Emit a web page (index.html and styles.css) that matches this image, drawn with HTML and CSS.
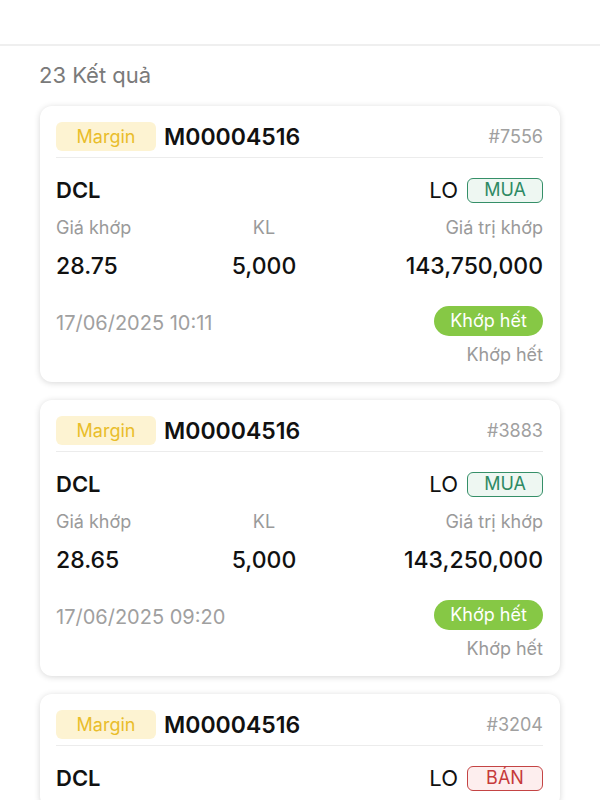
FILE: index.html
```html
<!DOCTYPE html>
<html lang="vi">
<head>
    <meta charset="UTF-8">
    <meta name="viewport" content="width=device-width, initial-scale=1.0">
    <title>Lệnh khớp</title>
    <link rel="stylesheet" href="styles.css">
</head>
<body>
    <div class="topbar"></div>

    <div class="result-count">23 Kết quả</div>

    <div class="list">
        <div class="card">
            <div class="card-head">
                <span class="tag-margin">Margin</span>
                <span class="account">M00004516</span>
                <span class="order-no">#7556</span>
            </div>
            <div class="row-symbol">
                <span class="symbol">DCL</span>
                <div class="type">
                    <span class="lo">LO</span>
                    <span class="side buy">MUA</span>
                </div>
            </div>
            <div class="grid">
                <span class="label">Giá khớp</span>
                <span class="label center">KL</span>
                <span class="label right">Giá trị khớp</span>
                <span class="value">28.75</span>
                <span class="value center">5,000</span>
                <span class="value right">143,750,000</span>
            </div>
            <div class="card-foot">
                <span class="date">17/06/2025 10:11</span>
                <div class="status">
                    <span class="pill">Khớp hết</span>
                    <span class="status-text">Khớp hết</span>
                </div>
            </div>
        </div>

        <div class="card">
            <div class="card-head">
                <span class="tag-margin">Margin</span>
                <span class="account">M00004516</span>
                <span class="order-no">#3883</span>
            </div>
            <div class="row-symbol">
                <span class="symbol">DCL</span>
                <div class="type">
                    <span class="lo">LO</span>
                    <span class="side buy">MUA</span>
                </div>
            </div>
            <div class="grid">
                <span class="label">Giá khớp</span>
                <span class="label center">KL</span>
                <span class="label right">Giá trị khớp</span>
                <span class="value">28.65</span>
                <span class="value center">5,000</span>
                <span class="value right">143,250,000</span>
            </div>
            <div class="card-foot">
                <span class="date">17/06/2025 09:20</span>
                <div class="status">
                    <span class="pill">Khớp hết</span>
                    <span class="status-text">Khớp hết</span>
                </div>
            </div>
        </div>

        <div class="card">
            <div class="card-head">
                <span class="tag-margin">Margin</span>
                <span class="account">M00004516</span>
                <span class="order-no">#3204</span>
            </div>
            <div class="row-symbol">
                <span class="symbol">DCL</span>
                <div class="type">
                    <span class="lo">LO</span>
                    <span class="side sell">BÁN</span>
                </div>
            </div>
        </div>
    </div>
</body>
</html>
```

FILE: styles.css
```css
* {
    margin: 0;
    padding: 0;
    box-sizing: border-box;
}

body {
    background: #fff;
    font-family: Inter, 'Noto Sans', sans-serif;
    color: #111;
    overflow: hidden;
}

.topbar {
    height: 46px;
    border-bottom: 2px solid #efefef;
}

.result-count {
    padding: 16px 39px 0;
    height: 60px;
    font-size: 22px;
    line-height: 27px;
    color: #7a7a7a;
}

.list {
    display: flex;
    flex-direction: column;
    gap: 18px;
    padding: 0 40px;
}

.card {
    background: #fff;
    border-radius: 12px;
    box-shadow: 0 1px 6px rgba(0, 0, 0, 0.16);
    padding: 16px 17px 16px 16px;
}

.card-head {
    display: flex;
    align-items: center;
    height: 36px;
    padding-bottom: 6px;
    border-bottom: 1px solid #ececec;
}

.tag-margin {
    width: 100px;
    height: 29px;
    line-height: 29px;
    text-align: center;
    border-radius: 6px;
    background: #fdf3d2;
    color: #e9bd2a;
    font-size: 18px;
}

.account {
    margin-left: 8px;
    font-size: 23px;
    font-weight: 600;
    color: #111;
}

.order-no {
    margin-left: auto;
    font-size: 18px;
    color: #a0a0a0;
}

.row-symbol {
    display: flex;
    justify-content: space-between;
    align-items: center;
    height: 28px;
    margin-top: 18px;
}

.symbol {
    font-size: 22px;
    font-weight: 600;
}

.type {
    display: flex;
    align-items: center;
    gap: 9px;
}

.lo {
    font-size: 22px;
}

.side {
    width: 76px;
    height: 25px;
    line-height: 22px;
    text-align: center;
    border-radius: 6px;
    font-size: 18px;
    border: 1.5px solid;
}

.side.buy {
    color: #2e8a64;
    border-color: #358f68;
    background: #eef7f2;
}

.side.sell {
    color: #c63a3a;
    border-color: #c44444;
    background: #fdeeee;
}

.grid {
    display: grid;
    grid-template-columns: 150px 116px 1fr;
    grid-template-rows: 24px 28px;
    row-gap: 12px;
    margin-top: 12px;
}

.label {
    font-size: 18px;
    line-height: 24px;
    color: #9a9a9a;
}

.value {
    font-size: 23px;
    line-height: 28px;
    font-weight: 500;
    color: #111;
}

.center {
    text-align: center;
}

.right {
    text-align: right;
}

.card-foot {
    display: flex;
    justify-content: space-between;
    align-items: flex-start;
    margin-top: 26px;
}

.date {
    margin-top: 4px;
    font-size: 20px;
    line-height: 26px;
    color: #a0a0a0;
}

.status {
    display: flex;
    flex-direction: column;
    align-items: flex-end;
    gap: 8px;
}

.pill {
    width: 109px;
    height: 30px;
    line-height: 30px;
    text-align: center;
    border-radius: 15px;
    background: #86c845;
    color: #fff;
    font-size: 18px;
}

.status-text {
    font-size: 18px;
    line-height: 22px;
    color: #9a9a9a;
}
```
